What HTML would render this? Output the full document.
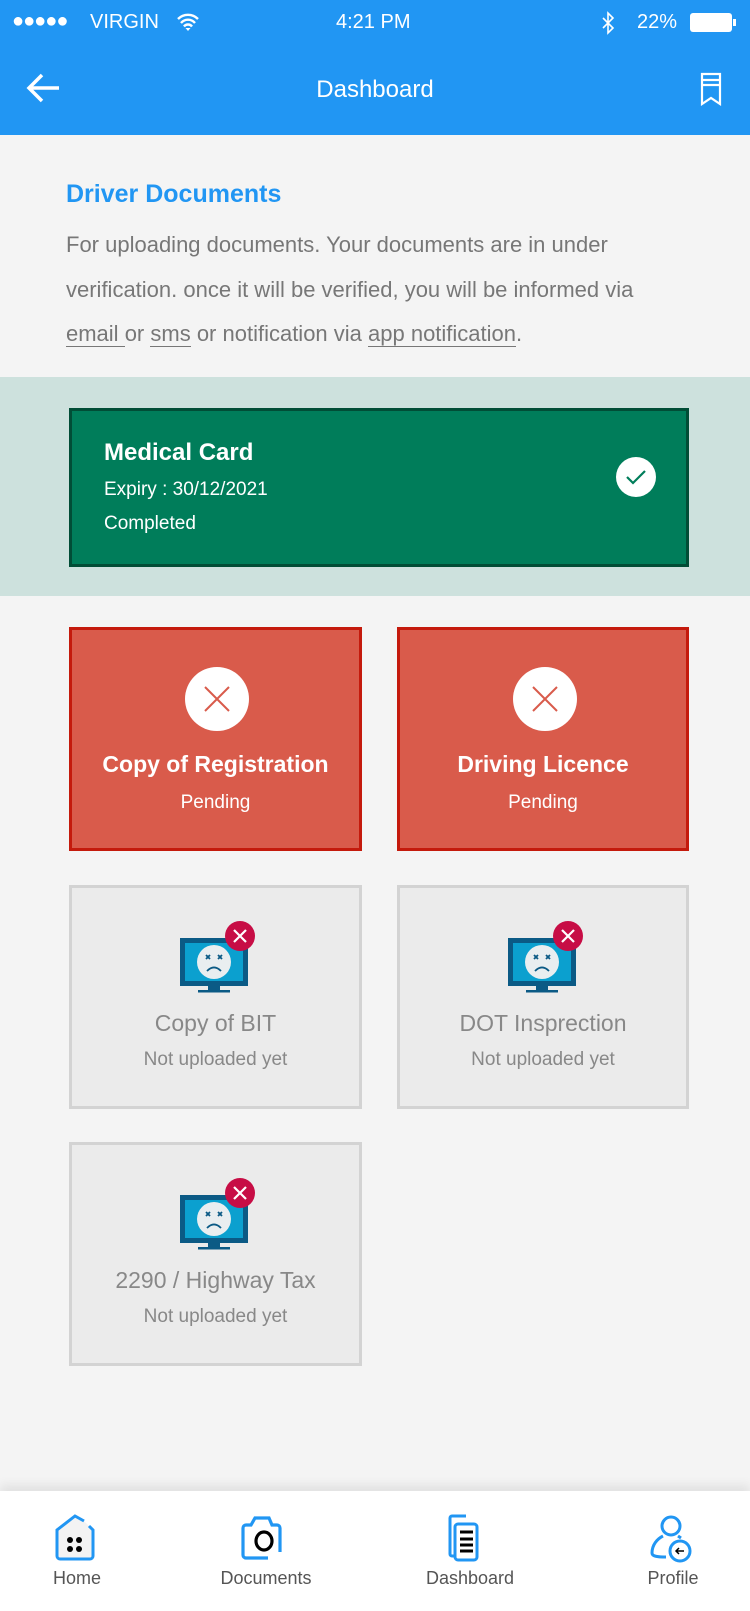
<!DOCTYPE html>
<html><head><meta charset="utf-8"><style>
*{margin:0;padding:0;box-sizing:border-box}
body{width:750px;height:1611px;background:#f4f4f4;font-family:"Liberation Sans",sans-serif;position:relative;overflow:hidden}
.abs{position:absolute}
.hdr{left:0;top:0;width:750px;height:135px;background:#2196f3;color:#fff}
.card{position:absolute;text-align:center}
.red{background:#d95b4b;border:3px solid #c41a0c}
.grey{background:#ebebeb;border:3px solid #d3d3d3}
.t{position:absolute;left:0;right:0;font-size:22px}
.nav{left:0;top:1491px;width:750px;height:120px;background:#fff;box-shadow:0 -6px 10px rgba(0,0,0,.08)}
.nl{position:absolute;top:1568px;font-size:18px;color:#555;transform:translateX(-50%)}
</style></head><body>
<div class="abs hdr">
 <div class="abs" style="left:12px;top:10px;font-size:20px;letter-spacing:-1px">●●●●●</div>
 <div class="abs" style="left:90px;top:11px;font-size:20px">VIRGIN</div>
 <svg class="abs" style="left:176px;top:12px" width="24" height="20" viewBox="0 0 24 20"><path d="M2 7a14 14 0 0 1 20 0M5 11a9 9 0 0 1 14 0M8 14.5a5 5 0 0 1 8 0" stroke="#fff" stroke-width="2.4" fill="none"/><path d="M9.5 16l2.5 3 2.5-3z" fill="#fff"/></svg>
 <div class="abs" style="left:336px;top:11px;font-size:20px">4:21 PM</div>
 <svg class="abs" style="left:600px;top:11px" width="16" height="25" viewBox="0 0 16 25"><path d="M3 7l10 10-5 5V2l5 5L3 17" stroke="#fff" stroke-width="1.6" fill="none"/></svg>
 <div class="abs" style="left:637px;top:11px;font-size:20px">22%</div>
 <div class="abs" style="left:690px;top:13px;width:42px;height:19px;background:#fff;border-radius:3px"></div>
 <div class="abs" style="left:733px;top:19px;width:3px;height:7px;background:#fff"></div>
 <svg class="abs" style="left:26px;top:72px" width="36" height="32" viewBox="0 0 36 32"><path d="M33 16H4M16 3L3 16l13 13" stroke="#fff" stroke-width="3.5" fill="none"/></svg>
 <div class="abs" style="left:0;width:750px;text-align:center;top:76px;font-size:24px">Dashboard</div>
 <svg class="abs" style="left:700px;top:72px" width="22" height="34" viewBox="0 0 22 34"><path d="M2 2h18v30l-9-6-9 6zM2 8h18M2 13h18" stroke="#fff" stroke-width="2.2" fill="none"/></svg>
</div>
<div class="abs" style="left:66px;top:180px;font-size:25px;font-weight:bold;color:#2196f3">Driver Documents</div>
<div class="abs" style="left:66px;top:223px;white-space:nowrap;font-size:22px;line-height:44.5px;color:#777">For uploading documents. Your documents are in under<br>verification. once it will be verified, you will be informed via<br><span style="border-bottom:1px solid #777">email </span> or <span style="border-bottom:1px solid #777">sms</span> or notification via <span style="border-bottom:1px solid #777">app notification</span>.</div>
<div class="abs" style="left:0;top:377px;width:750px;height:219px;background:#cde1dd"></div>
<div class="abs" style="left:69px;top:408px;width:620px;height:159px;background:#007d5a;border:3px solid #014d36;color:#fff">
 <div class="abs" style="left:32px;top:28px;font-size:24px;font-weight:bold">Medical Card</div>
 <div class="abs" style="left:32px;top:68px;font-size:19px">Expiry : 30/12/2021</div>
 <div class="abs" style="left:32px;top:102px;font-size:19px">Completed</div>
 <svg class="abs" style="left:544px;top:46px" width="40" height="40" viewBox="0 0 40 40"><circle cx="20" cy="20" r="20" fill="#fff"/><path d="M11 20l6 6 12-12" stroke="#007d5a" stroke-width="2.2" fill="none"/></svg>
</div>
<div class="card red" style="left:69px;top:627px;width:293px;height:224px"><svg class="abs" style="left:113px;top:37px" width="64" height="64"><circle cx="32" cy="32" r="32" fill="#fff"/><path d="M20 20l24 24M44 20L20 44" stroke="#d95b4b" stroke-width="2"/></svg><div class="t" style="top:121px;color:#fff;font-weight:bold;font-size:23px">Copy of Registration</div><div class="t" style="top:162px;color:#fff;font-size:19px">Pending</div></div>
<div class="card red" style="left:397px;top:627px;width:292px;height:224px"><svg class="abs" style="left:113px;top:37px" width="64" height="64"><circle cx="32" cy="32" r="32" fill="#fff"/><path d="M20 20l24 24M44 20L20 44" stroke="#d95b4b" stroke-width="2"/></svg><div class="t" style="top:121px;color:#fff;font-weight:bold;font-size:23px">Driving Licence</div><div class="t" style="top:162px;color:#fff;font-size:19px">Pending</div></div>
<svg width="0" height="0" style="position:absolute"><defs><symbol id="mon" viewBox="0 0 80 74"><rect x="2" y="18" width="68" height="48" fill="#0b5a85"/><rect x="7" y="23" width="58" height="38" fill="#0ba0cf"/><circle cx="36" cy="42" r="17" fill="#e9eef0"/><path d="M28 35l4 4M32 35l-4 4M40 35l4 4M44 35l-4 4" stroke="#0b5a85" stroke-width="1.8"/><path d="M29 51q7-7 14 0" stroke="#0b5a85" stroke-width="1.8" fill="none"/><rect x="30" y="66" width="12" height="4" fill="#0b5a85"/><rect x="20" y="70" width="32" height="2.5" fill="#0b5a85"/><circle cx="62" cy="16" r="15" fill="#c70d45"/><path d="M56 10l12 12M68 10L56 22" stroke="#fff" stroke-width="2.2"/></symbol></defs></svg>
<div class="card grey" style="left:69px;top:885px;width:293px;height:224px"><svg class="abs" style="left:106px;top:32px" width="80" height="74"><use href="#mon"/></svg><div class="t" style="top:122px;color:#888;font-size:23px">Copy of BIT</div><div class="t" style="top:161px;color:#888;font-size:19px">Not uploaded yet</div></div>
<div class="card grey" style="left:397px;top:885px;width:292px;height:224px"><svg class="abs" style="left:106px;top:32px" width="80" height="74"><use href="#mon"/></svg><div class="t" style="top:122px;color:#888;font-size:23px">DOT Insprection</div><div class="t" style="top:161px;color:#888;font-size:19px">Not uploaded yet</div></div>
<div class="card grey" style="left:69px;top:1142px;width:293px;height:224px"><svg class="abs" style="left:106px;top:32px" width="80" height="74"><use href="#mon"/></svg><div class="t" style="top:122px;color:#888;font-size:23px">2290 / Highway Tax</div><div class="t" style="top:161px;color:#888;font-size:19px">Not uploaded yet</div></div>
<div class="abs nav"></div>
<svg class="abs" style="left:52px;top:1514px" width="46" height="48" viewBox="0 0 46 48"><path d="M32 7L23 2 5 16v26a3 3 0 0 0 3 3h30a3 3 0 0 0 3-3V16l-4-4" stroke="#2196f3" stroke-width="3" fill="#f3f3f3"/><circle cx="18" cy="26" r="3"/><circle cx="27" cy="26" r="3"/><circle cx="18" cy="35" r="3"/><circle cx="27" cy="35" r="3"/></svg>
<svg class="abs" style="left:240px;top:1514px" width="46" height="46" viewBox="0 0 46 46"><path d="M28 44H6a3 3 0 0 1-3-3V14a3 3 0 0 1 3-3h5l4-7h14l3 7h5a3 3 0 0 1 3 3v24" stroke="#2196f3" stroke-width="3.2" fill="none"/><ellipse cx="24" cy="27" rx="8" ry="9" stroke="#000" stroke-width="3.2" fill="none"/></svg>
<svg class="abs" style="left:445px;top:1514px" width="44" height="50" viewBox="0 0 44 50"><path d="M12 42H7a2 2 0 0 1-2-2V4a2 2 0 0 1 2-2h14" stroke="#2196f3" stroke-width="3" fill="none"/><rect x="10" y="10" width="22" height="36" rx="3" stroke="#2196f3" stroke-width="3" fill="#fff"/><path d="M15 18h13M15 25h13M15 31h13M15 37h13" stroke="#000" stroke-width="3"/></svg>
<svg class="abs" style="left:648px;top:1514px" width="46" height="50" viewBox="0 0 46 50"><circle cx="23" cy="12" r="9" stroke="#2196f3" stroke-width="3" fill="none"/><path d="M15 22c-6 3-11 9-11 17 0 3 4 4 14 4" stroke="#2196f3" stroke-width="3" fill="none"/><path d="M30 22l3 2" stroke="#2196f3" stroke-width="3"/><circle cx="32" cy="37" r="10" stroke="#2196f3" stroke-width="3" fill="#fff"/><path d="M36 37h-8M31 34l-3 3 3 3" stroke="#000" stroke-width="1.5" fill="none"/></svg>
<div class="nl" style="left:77px">Home</div>
<div class="nl" style="left:266px">Documents</div>
<div class="nl" style="left:470px">Dashboard</div>
<div class="nl" style="left:673px">Profile</div>
</body></html>
